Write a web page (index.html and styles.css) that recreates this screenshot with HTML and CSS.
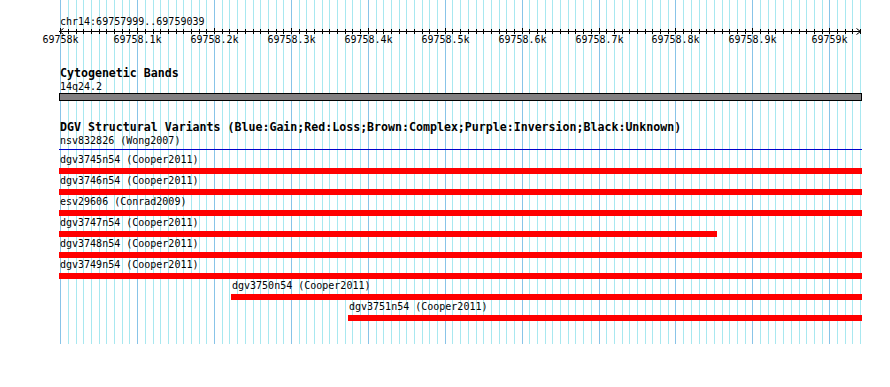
FILE: index.html
```html
<!DOCTYPE html>
<html lang="en">
<head>
    <meta charset="UTF-8">
    <title>chr14:69757999..69759039</title>
    <link rel="stylesheet" href="styles.css">
</head>
<body>
    <div class="panel" id="panel">
        <svg class="grid" id="grid"></svg>

        <div class="track ruler">
            <div class="label">chr14:69757999..69759039</div>
            <svg class="scale" id="scale" width="803" height="20"></svg>
        </div>

        <div class="track cyto">
            <div class="track-title">Cytogenetic Bands</div>
            <div class="label">14q24.2</div>
            <div class="band"></div>
        </div>

        <div class="track dgv">
            <div class="track-title">DGV Structural Variants (Blue:Gain;Red:Loss;Brown:Complex;Purple:Inversion;Black:Unknown)</div>

            <div class="feature">
                <div class="label">nsv832826 (Wong2007)</div>
                <div class="line"></div>
            </div>
            <div class="feature">
                <div class="label">dgv3745n54 (Cooper2011)</div>
                <div class="bar"></div>
            </div>
            <div class="feature">
                <div class="label">dgv3746n54 (Cooper2011)</div>
                <div class="bar"></div>
            </div>
            <div class="feature">
                <div class="label">esv29606 (Conrad2009)</div>
                <div class="bar"></div>
            </div>
            <div class="feature">
                <div class="label">dgv3747n54 (Cooper2011)</div>
                <div class="bar" style="width: 658px;"></div>
            </div>
            <div class="feature">
                <div class="label">dgv3748n54 (Cooper2011)</div>
                <div class="bar"></div>
            </div>
            <div class="feature">
                <div class="label">dgv3749n54 (Cooper2011)</div>
                <div class="bar"></div>
            </div>
            <div class="feature" style="margin-left: 172px;">
                <div class="label">dgv3750n54 (Cooper2011)</div>
                <div class="bar"></div>
            </div>
            <div class="feature" style="margin-left: 289px;">
                <div class="label">dgv3751n54 (Cooper2011)</div>
                <div class="bar"></div>
            </div>
        </div>
    </div>

    <script>
        document.addEventListener('DOMContentLoaded', function() {
            const NS = 'http://www.w3.org/2000/svg';
            const start = 69757999;
            const perBp = 0.769;
            const width = 803;

            // bp -> x inside the panel
            function px(pos) {
                return Math.round(0.5 + (pos - start) * perBp);
            }

            function line(svg, x1, y1, x2, y2, cls) {
                const el = document.createElementNS(NS, 'line');
                el.setAttribute('x1', x1);
                el.setAttribute('y1', y1);
                el.setAttribute('x2', x2);
                el.setAttribute('y2', y2);
                el.setAttribute('class', cls);
                svg.appendChild(el);
            }

            const grid = document.getElementById('grid');
            const scale = document.getElementById('scale');

            // axis with arrows at both ends
            line(scale, 0, 3.5, width - 1, 3.5, 'axis');
            const arrows = document.createElementNS(NS, 'path');
            arrows.setAttribute('d', 'M4.5 0.5 L0.5 3.5 L4.5 6.5 M797.5 0.5 L801.5 3.5 L797.5 6.5');
            arrows.setAttribute('class', 'axis');
            scale.appendChild(arrows);

            for (let pos = 69758000; px(pos) < width; pos += 10) {
                const x = px(pos) + 0.5;
                const major = pos % 100 === 0;

                line(grid, x, 0, x, '100%', major ? 'major' : 'minor');
                line(scale, x, major ? 0 : 1, x, 6, 'axis');

                if (major) {
                    const label = document.createElementNS(NS, 'text');
                    label.setAttribute('x', x);
                    label.setAttribute('y', 15);
                    label.textContent = (pos / 1000) + 'k';
                    scale.appendChild(label);
                }
            }
        });
    </script>
</body>
</html>
```

FILE: styles.css
```css
* {
    margin: 0;
    padding: 0;
    box-sizing: border-box;
}

body {
    background: #fff;
    font-family: "DejaVu Sans Mono", "Liberation Mono", monospace;
    font-size: 10px;
    line-height: 13px;
    color: #000;
}

.panel {
    position: relative;
    width: 803px;
    margin-left: 59px;
    padding-top: 15px;
    padding-bottom: 23px;
}

.grid {
    position: absolute;
    top: 0;
    left: 0;
    width: 100%;
    height: 100%;
}

.grid .minor {
    stroke: #a8e8f0;
    stroke-width: 1;
}

.grid .major {
    stroke: #88c4e8;
    stroke-width: 1;
}

.track {
    position: relative;
}

.label {
    padding-left: 1px;
    white-space: nowrap;
}

.scale {
    display: block;
    overflow: visible;
}

.scale .axis {
    stroke: #000;
    stroke-width: 1;
    fill: none;
}

.scale text {
    font-family: "DejaVu Sans Mono", "Liberation Mono", monospace;
    font-size: 10px;
    text-anchor: middle;
    fill: #000;
}

.track-title {
    padding-left: 1px;
    font-size: 11.6px;
    font-weight: bold;
    white-space: nowrap;
}

.cyto {
    margin-top: 19px;
}

.band {
    height: 8px;
    border: 1px solid #000;
    background: #828082;
}

.dgv {
    margin-top: 20px;
}

.line {
    height: 1px;
    margin-top: 2px;
    margin-bottom: 3px;
    background: #0000cc;
}

.bar {
    height: 6px;
    margin-top: 2px;
    background: #ff0000;
}
```
